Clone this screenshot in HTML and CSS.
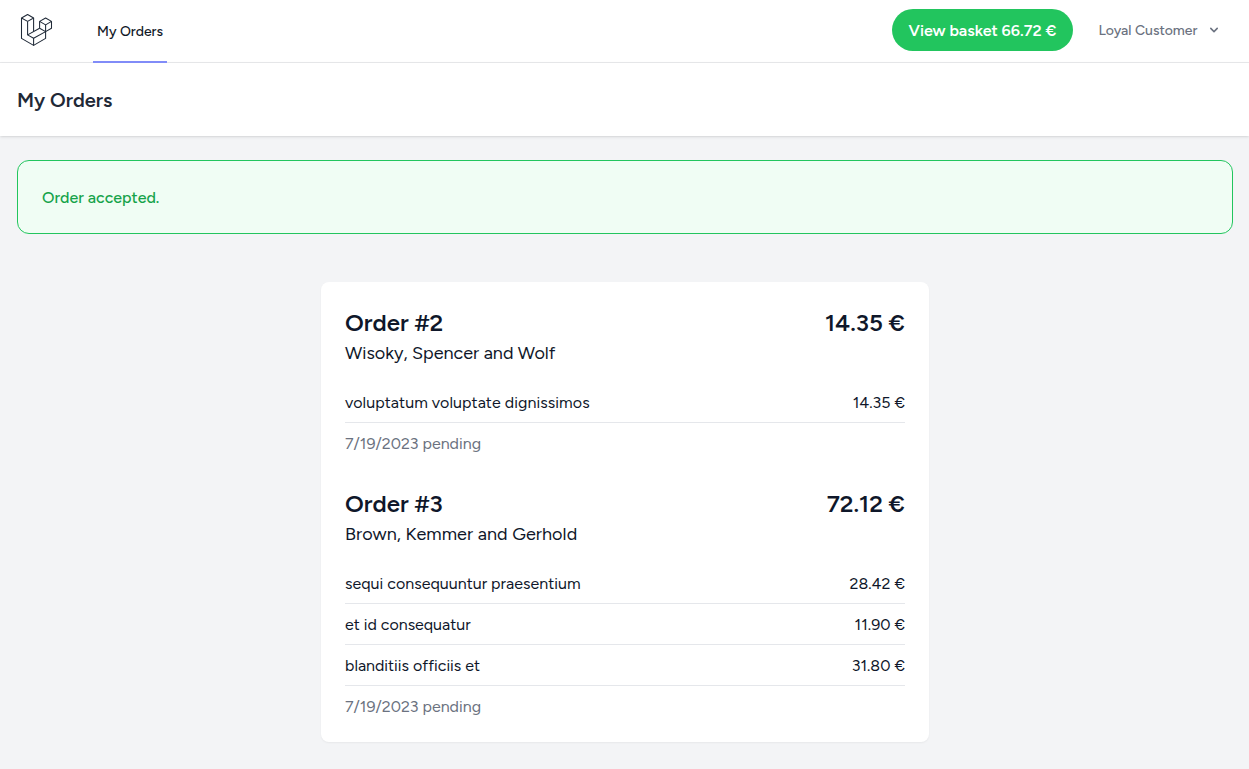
FILE: index.html
```html
<!DOCTYPE html>
<html lang="en">
<head>
<meta charset="utf-8">
<title>My Orders</title>
<link rel="stylesheet" href="styles.css">
</head>
<body>
<nav class="nav">
  <div class="container nav-inner">
    <a class="logo" href="#" aria-label="Home">
      <svg width="36" height="36" viewBox="-0.5 0 36 36" fill="none" stroke="#1f2937" stroke-width="1.05" stroke-linejoin="round">
        <path d="M9.1 2.5 15.1 6 9.1 9.4 3 6Z"/>
        <path d="M3 6V26.4L15.1 33.4 27.1 26.4V12.9"/>
        <path d="M9.1 9.4V22.9L15.1 26.3V33.4M15.1 6V19.5"/>
        <path d="M27.1 6 33 9.4 27.1 12.9 21.1 9.4Z"/>
        <path d="M21.1 9.4V16.2L27.1 19.6 33 16.2V9.4"/>
        <path d="M9.1 22.9 21.1 16.2M15.1 26.3 27.1 19.6"/>
      </svg>
    </a>
    <a class="nav-link" href="#"><span>My Orders</span></a>
    <div class="nav-right">
      <a class="basket" href="#"><span>View basket 66.72 €</span></a>
      <button class="user" type="button">
        <span>Loyal Customer</span>
        <svg width="16" height="16" viewBox="0 0 20 20" fill="#6b7280"><path fill-rule="evenodd" clip-rule="evenodd" d="M5.293 7.293a1 1 0 011.414 0L10 10.586l3.293-3.293a1 1 0 111.414 1.414l-4 4a1 1 0 01-1.414 0l-4-4a1 1 0 010-1.414z"/></svg>
      </button>
    </div>
  </div>
</nav>
<header class="page-header"><div class="container"><h1 class="page-title">My Orders</h1></div></header>
<main class="container main">
  <div class="alert">Order accepted.</div>
  <div class="card">
    <section class="order">
      <div class="order-head"><h2>Order #2</h2><span class="total">14.35 €</span></div>
      <div class="restaurant">Wisoky, Spencer and Wolf</div>
      <div class="items">
        <div class="item"><span class="loose">voluptatum voluptate dignissimos</span><span class="price">14.35 €</span></div>
      </div>
      <div class="status">7/19/2023 pending</div>
    </section>
    <section class="order">
      <div class="order-head"><h2>Order #3</h2><span class="total">72.12 €</span></div>
      <div class="restaurant loose">Brown, Kemmer and Gerhold</div>
      <div class="items">
        <div class="item"><span class="slightly-loose">sequi consequuntur praesentium</span><span class="price">28.42 €</span></div>
        <div class="item"><span>et id consequatur</span><span class="price">11.90 €</span></div>
        <div class="item"><span>blanditiis officiis et</span><span class="price">31.80 €</span></div>
      </div>
      <div class="status">7/19/2023 pending</div>
    </section>
  </div>
</main>
</body>
</html>
```
FILE: styles.css
```css
* { box-sizing: border-box; margin: 0; padding: 0; }
body { min-height: 769px; background: #f3f4f6; color: #0f172a; font: 400 16px/24px Figtree, Lato, sans-serif; -webkit-font-smoothing: antialiased; }
a { color: inherit; text-decoration: none; }
.container { width: 1216px; margin: 0 auto 0 17px; }
.nav { height: 63px; background: #fff; border-bottom: 1px solid #e9eaec; }
.nav-inner { display: flex; height: 63px; }
.logo { display: flex; width: 37px; margin-left: 1px; padding-top: 12px; }
.logo svg { flex: none; }
.nav-link { display: flex; align-items: center; justify-content: center; width: 74px; margin-left: 38px; padding-top: 2px; border-bottom: 2px solid #818cf8; color: #111827; font-size: 14px; font-weight: 500; }
.nav-right { display: flex; align-items: center; margin-left: auto; padding: 0 11px 3px 0; }
.basket { display: flex; align-items: center; justify-content: center; width: 181px; height: 42px; padding-top: 2px; border-radius: 21px; background: #22c55e; color: #fff; font-weight: 600; }
.user { display: flex; align-items: center; justify-content: space-between; width: 124px; margin-left: 25px; padding-left: .5px; border: 0; background: none; color: #6b7280; font: 500 14px/20px Figtree, Lato, sans-serif; }
.user span { padding-top: 2px; }
.page-header { height: 73px; padding-top: 23px; background: #fff; box-shadow: 0 1px 3px rgba(0,0,0,.1), 0 1px 2px -1px rgba(0,0,0,.1); }
.page-title { color: #1f2937; font-size: 20px; font-weight: 600; line-height: 28px; }
.main { padding-top: 24px; }
.alert { height: 74px; padding: 24px; border: 1px solid #22c55e; border-radius: 12px; background: #f0fdf4; color: #16a34a; font-weight: 500; line-height: 26px; }
.card { display: flex; flex-direction: column; gap: 32px; width: 608px; margin: 48px auto 0; padding: 24px; border-radius: 8px; background: #fff; box-shadow: 0 1px 2px rgba(0,0,0,.05); }
.order-head { display: flex; justify-content: space-between; font-size: 24px; font-weight: 600; line-height: 34px; height: 32px; }
.order-head h2 { font: inherit; }
.restaurant { font-size: 18px; line-height: 30px; height: 28px; }
.items { padding-top: 16px; }
.item { display: flex; justify-content: space-between; height: 41px; padding: 8px 0; border-bottom: 1px solid #e5e7eb; line-height: 26px; }
.loose { letter-spacing: .075px; }
.slightly-loose { letter-spacing: .035px; }
.status { height: 32px; padding-top: 8px; color: #6b7280; line-height: 26px; }
```
